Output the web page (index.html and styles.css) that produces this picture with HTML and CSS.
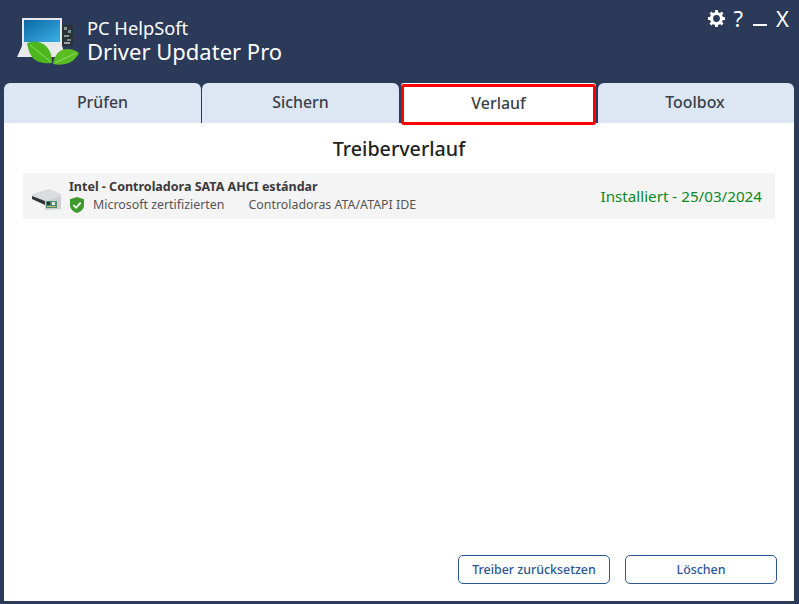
FILE: index.html
```html
<!doctype html>
<html>
<head>
<meta charset="utf-8">
<title>PC HelpSoft Driver Updater Pro</title>
<link rel="stylesheet" href="styles.css">
</head>
<body>

<div id="wrap">

<header class="titlebar">
<svg class="logo" width="66" height="50" viewBox="0 0 66 50">
<defs>
<linearGradient id="screen" x1="0" y1="0" x2="1" y2="1">
<stop offset="0" stop-color="#0b68a8"/>
<stop offset="1" stop-color="#3bb0e2"/>
</linearGradient>
</defs>
<rect x="45" y="9" width="11" height="21" fill="#2c3134"/>
<rect x="47" y="11" width="3" height="3" fill="#8a9698"/>
<rect x="51" y="14" width="3" height="3" fill="#5f9aa5"/>
<rect x="47" y="19" width="5" height="2" fill="#8b9597"/>
<rect x="50" y="23" width="4" height="2" fill="#77898b"/>
<rect x="47" y="26" width="6" height="2" fill="#9aa3a5"/>
<rect x="5" y="2" width="40" height="29" fill="#e6e8ea"/>
<rect x="7" y="4" width="36" height="22" fill="url(#screen)"/>
<path d="M5 30h40l4 11H0z" fill="#e8eaec"/>
<path d="M10 27c5-2 14-2 19 3 5 5 6 11 6 17-9 1-16-1-20-6-3-4-4-9-5-14z" fill="#4cb81e"/>
<path d="M36 48c1-6 3-11 9-14 6-2 12-1 17 3-3 6-8 10-14 11-4 1-8 1-12 0z" fill="#5abd24"/>
<path d="M13 29l21 17M38 47l21-10" stroke="#93da66" stroke-width="1" fill="none"/>
</svg>
<div class="brand">
<div class="brand-top">PC HelpSoft</div>
<div class="brand-name">Driver Updater Pro</div>
</div>
<div class="winbtns">
<svg class="gear" width="17" height="17" viewBox="0 0 16 16">
<circle cx="8" cy="8" r="4.700" fill="none" stroke="#fff" stroke-width="3"/>
<path d="M8 0v3M8 13v3M0 8h3M13 8h3M2.300 2.300l2.200 2.200M11.500 11.500l2.200 2.200M2.300 13.700l2.200-2.200M11.500 4.500l2.200-2.200" stroke="#fff" stroke-width="2.600"/>
</svg>
<span class="help">?</span>
<span class="minimize"></span>
<span class="close">X</span>
</div>
</header>

<nav class="tabs">
<div class="tab">Prüfen</div>
<div class="tab">Sichern</div>
<div class="tab active">Verlauf</div>
<div class="tab last">Toolbox</div>
</nav>

<main class="panel">
<h1>Treiberverlauf</h1>

<div class="row">
<svg class="device" width="30" height="21" viewBox="0 0 30 21">
<path d="M0 5L17 0l12 5v2L13 12 0 7z" fill="#dadddd"/>
<path d="M0 7l13 5v4L0 10z" fill="#2f3436"/>
<path d="M13 12l16-5v13l-16 1z" fill="#cdd1d1"/>
<rect x="14" y="12" width="11" height="7" fill="#4c8a72"/>
<rect x="15" y="13" width="3" height="3" fill="#1f3a34"/>
<rect x="20" y="13" width="3" height="3" fill="#e8efe9"/>
<rect x="15" y="17" width="9" height="1" fill="#c9b26a"/>
</svg>
<div class="row-text">
<div class="row-title">Intel - Controladora SATA AHCI estándar</div>
<div class="row-sub">
<svg class="shield" width="16" height="16" viewBox="0 0 16 16">
<path d="M8 0l7 2.200V8c0 4-3 6.600-7 8-4-1.400-7-4-7-8V2.200z" fill="#3f9a2d"/>
<path d="M4.300 8l2.700 2.800 4.700-5.200" stroke="#fff" stroke-width="1.800" fill="none"/>
</svg>
<span class="cert">Microsoft zertifizierten</span>
<span class="category">Controladoras ATA/ATAPI IDE</span>
</div>
</div>
<div class="status">Installiert - 25/03/2024</div>
</div>

<div class="actions">
<button class="btn">Treiber zurücksetzen</button>
<button class="btn">Löschen</button>
</div>
</main>

</div>

</body>
</html>
```

FILE: styles.css
```css
html, body {margin: 0; height: 100%; overflow: hidden;}
body {background-color: #2a3a58; font-family: "Noto Sans", "Open Sans", sans-serif; color: #3a3f47;}

#wrap {display: flex; flex-direction: column; height: 604px; padding: 0 5px 3px 4px; box-sizing: border-box;}

.titlebar {display: flex; height: 83px; flex: none; color: #fff; padding-left: 13px;}
.logo {flex: none; margin-top: 16px;}
.brand {margin: 18px 0 0 4px;}
.brand-top {font-size: 18.300px; line-height: 20px;}
.brand-name {font-size: 22px; line-height: 26px;}

.winbtns {margin: 7px 0 0 auto; display: flex; align-items: flex-start; padding-right: 5px;}
.gear {margin: 3px 9px 0 0;}
.help {font-size: 22px; line-height: 22px; margin-right: 10px;}
.minimize {width: 14px; height: 2px; background-color: #fff; margin: 17px 9px 0 0;}
.close {font-size: 22px; line-height: 22px;}

.tabs {display: flex; gap: 1px; height: 40px; flex: none;}
.tab {flex: none; width: 197px; background-color: #dde7f4; border-radius: 6px 6px 0 0; text-align: center; font-size: 15.900px; font-weight: 500; line-height: 38px;}
.tab.active {width: 195px; height: 41px; background-color: #fff; border: 3px solid #f00; border-radius: 3px; line-height: 33px; margin: 1px 1px 0; box-sizing: border-box; box-shadow: 0 -1px 0 #fff; z-index: 1;}
.tab.last {flex: 1; padding-right: 2px;}

.panel {flex: 1; background-color: #fff; display: flex; flex-direction: column; padding: 0 19px;}
h1 {font-size: 19.700px; font-weight: 500; color: #222; text-align: center; line-height: 26px; margin: 13px 0 11px;}

.row {display: flex; align-items: center; height: 46px; background-color: #f4f4f4; padding: 0 13px 0 9px;}
.device {flex: none; margin: 6px 7px 0 0;}
.row-title {font-size: 12.500px; font-weight: 700; line-height: 16px; color: #3a3a3a;}
.row-sub {display: flex; align-items: center; font-size: 12.400px; line-height: 18px; color: #555; padding-top: 1px;}
.shield {margin-right: 8px;}
.cert {margin-right: 24px;}
.status {margin-left: auto; font-size: 15.200px; color: #0a8a24;}

.actions {margin: auto -2px 17px 0; display: flex; justify-content: flex-end; gap: 15px;}
.btn {width: 152px; height: 29px; background-color: #fff; border: 1px solid #2b5797; border-radius: 5px; color: #2b5797; font: 500 12.400px "Noto Sans", sans-serif; padding: 0;}
```
